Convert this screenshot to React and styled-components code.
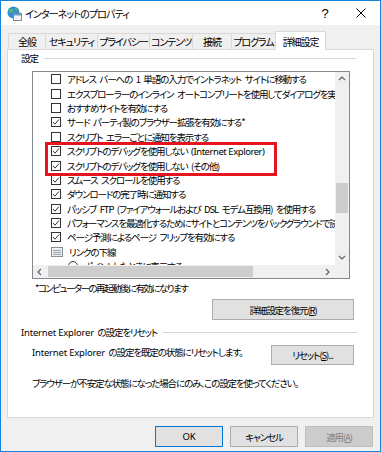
import React from "react";
import styled, { createGlobalStyle } from "styled-components";

const GlobalStyle = createGlobalStyle`
  html, body {
    margin: 0;
    padding: 0;
    background: #fff;
  }
  body {
    font-family: "Noto Sans CJK JP", "Noto Sans", sans-serif;
    font-size: 9.5px;
    letter-spacing: -1.1px;
    word-spacing: 2.5px;
    color: #000;
    font-feature-settings: "palt" 1;
  }
  * {
    box-sizing: border-box;
  }
`;

const tabs = ["全般", "セキュリティ", "プライバシー", "コンテンツ", "接続", "プログラム", "詳細設定"];
const tabWidths = [38, 53, 53, 44, 40, 45, 51];

const settings = [
  { type: "check", checked: false, label: "アドレス バーへの 1 単語の入力でイントラネット サイトに移動する" },
  { type: "check", checked: false, label: "エクスプローラーのインライン オートコンプリートを使用してダイアログを実行する" },
  { type: "check", checked: false, label: "おすすめサイトを有効にする" },
  { type: "check", checked: true, label: "サード パーティ製のブラウザー拡張を有効にする*" },
  { type: "check", checked: false, label: "スクリプト エラーごとに通知を表示する" },
  { type: "check", checked: true, label: "スクリプトのデバッグを使用しない", latin: "(Internet Explorer)" },
  { type: "check", checked: true, label: "スクリプトのデバッグを使用しない (その他)" },
  { type: "check", checked: true, label: "スムース スクロールを使用する" },
  { type: "check", checked: true, label: "ダウンロードの完了時に通知する" },
  { type: "check", checked: true, label: "パッシブ FTP (ファイアウォールおよび DSL モデム互換用) を使用する" },
  { type: "check", checked: true, label: "パフォーマンスを最適化するためにサイトとコンテンツをバックグラウンドで読み込む" },
  { type: "check", checked: true, label: "ページ予測によるページ フリップを有効にする" },
  { type: "group", label: "リンクの下線" },
  { type: "radio", label: "ポイントしたときに表示する" },
];

const GlobeIcon = () => (
  <svg width="15" height="15" viewBox="0 0 15 15">
    <circle cx="6.5" cy="6.5" r="6" fill="#2f8fd8" />
    <path d="M2 4 Q4 2 6 3 Q7 5 5 6 Q4 8 2.5 7 Z" fill="#5cb85c" />
    <path d="M7.5 1.5 Q10 2 11 4 Q9 5 8 4 Z" fill="#5cb85c" />
    <rect x="6.5" y="7.5" width="8" height="7" fill="#f4f4f4" stroke="#7d8a96" />
    <rect x="7" y="8" width="7" height="1.5" fill="#6f9fcf" />
  </svg>
);

const CloseIcon = () => (
  <svg width="10" height="10" viewBox="0 0 10 10">
    <path d="M0.5 0.5 L9.5 9.5 M9.5 0.5 L0.5 9.5" stroke="#000" strokeWidth="1" />
  </svg>
);

const Chevron = ({ dir }) => {
  const paths = {
    up: "M1 5 L4 2 L7 5",
    down: "M1 2 L4 5 L7 2",
    left: "M5 1 L2 4 L5 7",
    right: "M2 1 L5 4 L2 7",
  };
  return (
    <svg width="8" height="8" viewBox="0 0 8 8">
      <path d={paths[dir]} fill="none" stroke="#606060" strokeWidth="1.2" />
    </svg>
  );
};

const CheckMark = () => (
  <svg width="8" height="8" viewBox="0 0 8 8">
    <path d="M1 4 L3 6.2 L7 1.5" fill="none" stroke="#333" strokeWidth="1" />
  </svg>
);

const GroupIcon = () => (
  <svg width="12" height="10" viewBox="0 0 12 10">
    <rect x="0.5" y="0.5" width="11" height="9" fill="#eef0f3" stroke="#8a8f96" />
    <path d="M2 3.5 H10 M2 5.5 H10 M2 7.5 H10" stroke="#9aa4ae" strokeWidth="1" />
  </svg>
);

const App = () => {
  return (
    <>
      <GlobalStyle />
      <Window>
        <TitleBar>
          <GlobeIcon />
          <TitleText>インターネットのプロパティ</TitleText>
          <CaptionButton>?</CaptionButton>
          <CaptionButton>
            <CloseIcon />
          </CaptionButton>
        </TitleBar>
        <TabStrip>
          {tabs.map((t, i) => (
            <Tab key={t} $active={i === tabs.length - 1} $width={tabWidths[i]}>
              {t}
            </Tab>
          ))}
        </TabStrip>
        <Panel>
          <GroupHeader $lineEnd={17}>
            <span>設定</span>
            <GroupLine />
          </GroupHeader>
          <ListBox>
            <ListGrid>
              <Viewport>
                {settings.map((s) => (
                  <SettingRow key={s.label + (s.latin || "")} $nested={s.type === "radio"}>
                    {s.type === "check" && <CheckBox>{s.checked && <CheckMark />}</CheckBox>}
                    {s.type === "group" && <GroupIcon />}
                    {s.type === "radio" && <Radio />}
                    <span>
                      {s.label}
                      {s.latin && (
                        <>
                          {" "}
                          <Latin $tight>{s.latin}</Latin>
                        </>
                      )}
                    </span>
                  </SettingRow>
                ))}
              </Viewport>
              <VScroll>
                <ArrowCell>
                  <Chevron dir="up" />
                </ArrowCell>
                <VTrack>
                  <VThumb $offset={97} />
                </VTrack>
                <ArrowCell>
                  <Chevron dir="down" />
                </ArrowCell>
              </VScroll>
              <HScroll>
                <ArrowCell>
                  <Chevron dir="left" />
                </ArrowCell>
                <HTrack>
                  <HThumb $width={205} />
                </HTrack>
                <ArrowCell>
                  <Chevron dir="right" />
                </ArrowCell>
              </HScroll>
              <Corner />
            </ListGrid>
            <Highlight />
          </ListBox>
          <Note>*コンピューターの再起動後に有効になります</Note>
          <RestoreButton>
            詳細設定を復元(<u>R</u>)
          </RestoreButton>
          <GroupHeader $top={5} $lineEnd={16}>
            <span>
              <Latin>Internet Explorer</Latin> の設定をリセット
            </span>
            <GroupLine />
          </GroupHeader>
          <ResetRow>
            <BodyText>
              <Latin>Internet Explorer</Latin> の設定を既定の状態にリセットします。
            </BodyText>
            <ResetButton>
              リセット(<u>S</u>)...
            </ResetButton>
          </ResetRow>
          <BodyText $top={11}>ブラウザーが不安定な状態になった場合にのみ、この設定を使ってください。</BodyText>
        </Panel>
        <DialogButtons>
          <Button $default>
            <Latin>OK</Latin>
          </Button>
          <Button>キャンセル</Button>
          <Button disabled>
            適用(<u>A</u>)
          </Button>
        </DialogButtons>
      </Window>
    </>
  );
};

const Window = styled.div`
  width: 381px;
  height: 452px;
  border: 1px solid #1883d7;
  display: flex;
  flex-direction: column;
  background: #f0f0f0;
`;

const TitleBar = styled.div`
  height: 24px;
  background: #fff;
  display: flex;
  align-items: center;
  padding-left: 6px;
  padding-right: 1px;
  svg {
    flex-shrink: 0;
  }
`;

const TitleText = styled.div`
  flex: 1;
  margin-left: 3px;
  font-size: 10px;
  letter-spacing: -0.9px;
`;

const CaptionButton = styled.div`
  width: 36px;
  height: 24px;
  display: flex;
  align-items: center;
  justify-content: center;
  font-family: "Liberation Sans", sans-serif;
  font-size: 13px;
  letter-spacing: 0;
`;

const Latin = styled.span`
  font-family: "Noto Sans", sans-serif;
  font-size: 9.5px;
  letter-spacing: ${(p) => (p.$tight ? -0.45 : -0.2)}px;
  word-spacing: 0;
`;

const TabStrip = styled.div`
  height: 24px;
  display: flex;
  align-items: flex-end;
  padding-left: 7px;
`;

const Tab = styled.div`
  width: ${(p) => p.$width}px;
  height: ${(p) => (p.$active ? 19 : 16)}px;
  margin-left: -1px;
  margin-bottom: ${(p) => (p.$active ? -1 : 0)}px;
  border: 1px solid #d9d9d9;
  border-bottom: none;
  background: ${(p) => (p.$active ? "#fff" : "#f0f0f0")};
  position: relative;
  z-index: ${(p) => (p.$active ? 1 : 0)};
  display: flex;
  align-items: center;
  justify-content: center;
  white-space: nowrap;
  font-size: 10px;
  &:first-child {
    margin-left: 0;
  }
`;

const Panel = styled.div`
  margin-left: 6px;
  width: 367px;
  height: 369px;
  border: 1px solid #d9d9d9;
  background: #fff;
  display: flex;
  flex-direction: column;
`;

const GroupHeader = styled.div`
  margin-top: ${(p) => (p.$top != null ? p.$top : 1)}px;
  height: 14px;
  display: flex;
  align-items: center;
  padding-left: 13px;
  padding-right: ${(p) => p.$lineEnd}px;
  white-space: nowrap;
`;

const GroupLine = styled.div`
  flex: 1;
  margin-left: 6px;
  border-top: 1px solid #d5d5d5;
`;

const ListBox = styled.div`
  position: relative;
  margin-top: 6px;
  margin-left: 24px;
  width: 318px;
  height: 208px;
  border: 1px solid #828790;
`;

const ListGrid = styled.div`
  display: grid;
  grid-template-columns: 1fr 14px;
  grid-template-rows: 1fr 13px;
  height: 100%;
`;

const Viewport = styled.div`
  overflow: hidden;
  background: #fff;
`;

const SettingRow = styled.div`
  height: 14.4px;
  display: flex;
  align-items: center;
  gap: 6px;
  padding-left: ${(p) => (p.$nested ? 35 : 18)}px;
  white-space: nowrap;
  span {
    line-height: 14px;
  }
`;

const CheckBox = styled.div`
  width: 10px;
  height: 10px;
  flex-shrink: 0;
  border: 1px solid #333;
  display: flex;
  align-items: center;
  justify-content: center;
`;

const Radio = styled.div`
  width: 10px;
  height: 10px;
  flex-shrink: 0;
  border: 1px solid #333;
  border-radius: 50%;
`;

const VScroll = styled.div`
  background: #f0f0f0;
  display: flex;
  flex-direction: column;
`;

const HScroll = styled.div`
  background: #f0f0f0;
  display: flex;
`;

const ArrowCell = styled.div`
  flex: 0 0 14px;
  height: 14px;
  min-width: 14px;
  display: flex;
  align-items: center;
  justify-content: center;
  align-self: center;
`;

const VTrack = styled.div`
  flex: 1;
`;

const VThumb = styled.div`
  margin-top: ${(p) => p.$offset}px;
  margin-left: 1px;
  width: 12px;
  height: 30px;
  background: #cdcdcd;
`;

const HTrack = styled.div`
  flex: 1;
  display: flex;
  align-items: center;
`;

const HThumb = styled.div`
  margin-left: 1px;
  width: ${(p) => p.$width}px;
  height: 11px;
  background: #cdcdcd;
`;

const Corner = styled.div`
  background: #f0f0f0;
`;

const Highlight = styled.div`
  position: absolute;
  left: 12px;
  top: 70px;
  width: 232px;
  height: 34px;
  border: 3px solid #e5141f;
  pointer-events: none;
`;

const Note = styled.div`
  margin-top: 2px;
  padding-left: 27px;
  height: 15px;
  line-height: 15px;
  letter-spacing: -1.55px;
`;

const ButtonBase = styled.div`
  height: 21px;
  display: flex;
  align-items: center;
  justify-content: center;
  background: #e1e1e1;
  border: 1px solid #adadad;
  white-space: nowrap;
  u {
    text-underline-offset: 1px;
  }
`;

const RestoreButton = styled(ButtonBase)`
  margin-top: 3px;
  align-self: flex-end;
  margin-right: 19px;
  width: 142px;
`;

const ResetRow = styled.div`
  margin-top: 6px;
  display: flex;
  align-items: flex-start;
  justify-content: space-between;
  padding-left: 24px;
  padding-right: 19px;
`;

const ResetButton = styled(ButtonBase)`
  width: 83px;
  height: 20px;
`;

const BodyText = styled.div`
  margin-top: ${(p) => p.$top || 0}px;
  padding-left: ${(p) => (p.$top ? 24 : 0)}px;
  height: 14px;
  line-height: 14px;
  white-space: nowrap;
`;

const DialogButtons = styled.div`
  margin-top: 8px;
  display: flex;
  justify-content: flex-end;
  gap: 7px;
  padding-right: 7px;
`;

const Button = styled(ButtonBase)`
  width: 68px;
  border-color: ${(p) => (p.$default ? "#0078d7" : p.disabled ? "#bfbfbf" : "#adadad")};
  background: ${(p) => (p.disabled ? "#cccccc" : "#e1e1e1")};
  color: ${(p) => (p.disabled ? "#838383" : "#000")};
`;

export default App;
